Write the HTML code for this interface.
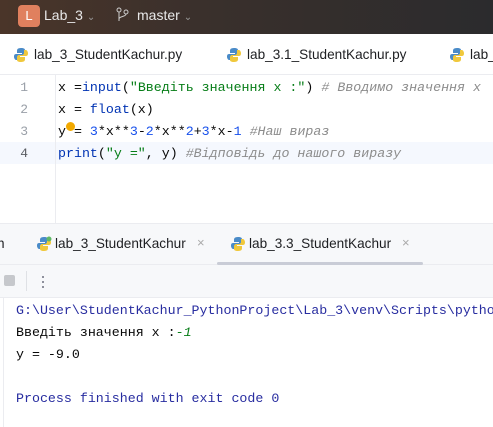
<!DOCTYPE html>
<html><head><meta charset="utf-8"><style>
*{margin:0;padding:0;box-sizing:border-box}
body{width:493px;height:427px;overflow:hidden;background:#fff;font-family:"Liberation Sans","DejaVu Sans",sans-serif;position:relative}
.abs{position:absolute}
.title{left:0;top:0;width:493px;height:34px;background:linear-gradient(90deg,#4a3529,#3a302c 40%,#2b2b2d)}
.mono{font-family:"Liberation Mono","DejaVu Sans Mono",monospace;font-size:13.3px;white-space:pre}
.ln{color:#9aa0a8;font-size:13px;left:0;width:28px;text-align:right}
.tab{font-size:13.6px;color:#1e1f22;white-space:nowrap}
.cm{color:#8c8c8c;font-style:italic}
.st{color:#067d17}
.nm{color:#1750eb}
.kw{color:#0033b3}
</style></head><body>
<div class="abs title"></div>
<div class="abs" style="left:18px;top:5px;width:22px;height:22px;border-radius:4px;background:#e0805e;color:#fff;font-size:13px;text-align:center;line-height:22px">L</div>
<div class="abs" style="left:44px;top:7px;color:#e8e8e8;font-size:14px">Lab_3 <span style="color:#999;font-size:10px">&#8964;</span></div>
<svg class="abs" style="left:116px;top:7px" width="14" height="16" viewBox="0 0 14 16"><circle cx="3" cy="3" r="2" fill="none" stroke="#ccc"/><circle cx="10" cy="5" r="2" fill="none" stroke="#ccc"/><path d="M3 5V14M10 7C10 10 3 9 3 12" fill="none" stroke="#ccc"/></svg>
<div class="abs" style="left:137px;top:7px;color:#e8e8e8;font-size:14px">master <span style="color:#999;font-size:10px">&#8964;</span></div>

<div class="abs" style="left:0;top:74px;width:493px;height:1px;background:#ebecf0"></div>
<svg class="abs" style="left:13px;top:47px" width="16" height="16" viewBox="0 0 16 16"><path d="M8 1C4 1 4 3 4 4V6H9V7H3C1 7 1 9 1 10S2 13 3 13H5V10C5 9 6 8 7 8H10C11 8 12 7 12 6V3C12 2 11 1 8 1Z" fill="#4a8bc8"/><path d="M8 15C12 15 12 13 12 12V10H7V9H13C15 9 15 7 15 6S14 3 13 3H11V6C11 7 10 8 9 8H6C5 8 4 9 4 10V13C4 14 5 15 8 15Z" fill="#f0c83c"/></svg>
<div class="abs tab" style="left:34px;top:47px">lab_3_StudentKachur.py</div>
<svg class="abs" style="left:226px;top:47px" width="16" height="16" viewBox="0 0 16 16"><path d="M8 1C4 1 4 3 4 4V6H9V7H3C1 7 1 9 1 10S2 13 3 13H5V10C5 9 6 8 7 8H10C11 8 12 7 12 6V3C12 2 11 1 8 1Z" fill="#4a8bc8"/><path d="M8 15C12 15 12 13 12 12V10H7V9H13C15 9 15 7 15 6S14 3 13 3H11V6C11 7 10 8 9 8H6C5 8 4 9 4 10V13C4 14 5 15 8 15Z" fill="#f0c83c"/></svg>
<div class="abs tab" style="left:247px;top:47px">lab_3.1_StudentKachur.py</div>
<svg class="abs" style="left:449px;top:47px" width="16" height="16" viewBox="0 0 16 16"><path d="M8 1C4 1 4 3 4 4V6H9V7H3C1 7 1 9 1 10S2 13 3 13H5V10C5 9 6 8 7 8H10C11 8 12 7 12 6V3C12 2 11 1 8 1Z" fill="#4a8bc8"/><path d="M8 15C12 15 12 13 12 12V10H7V9H13C15 9 15 7 15 6S14 3 13 3H11V6C11 7 10 8 9 8H6C5 8 4 9 4 10V13C4 14 5 15 8 15Z" fill="#f0c83c"/></svg>
<div class="abs tab" style="left:470px;top:47px">lab_</div>

<div class="abs" style="left:0;top:142px;width:493px;height:22px;background:#f5f8fe"></div>
<div class="abs" style="left:55px;top:75px;width:1px;height:148px;background:#ebecf0"></div>
<div class="abs mono ln" style="top:80px">1</div>
<div class="abs mono ln" style="top:102px">2</div>
<div class="abs mono ln" style="top:124px">3</div>
<div class="abs mono ln" style="top:146px;color:#5a5d63">4</div>
<div class="abs mono" style="left:58px;top:80px;color:#080808">x =<span class="kw">input</span>(<span class="st">"Введіть значення x :"</span>) <span class="cm"># Вводимо значення x</span></div>
<div class="abs mono" style="left:58px;top:102px;color:#080808">x = <span class="kw">float</span>(x)</div>
<div class="abs mono" style="left:58px;top:124px;color:#080808">y = <span class="nm">3</span>*x**<span class="nm">3</span>-<span class="nm">2</span>*x**<span class="nm">2</span>+<span class="nm">3</span>*x-<span class="nm">1</span> <span class="cm">#Наш вираз</span></div>
<div class="abs" style="left:66px;top:122px;width:9px;height:9px;border-radius:50%;background:#f2a900"></div>
<div class="abs mono" style="left:58px;top:146px;color:#080808"><span class="kw">print</span>(<span class="st">"y ="</span>, y) <span class="cm">#Відповідь до нашого виразу</span></div>

<div class="abs" style="left:0;top:223px;width:493px;height:75px;background:#f7f8fa;border-top:1px solid #ebecf0"></div>
<div class="abs" style="left:0;top:264px;width:493px;height:1px;background:#ebecf0"></div>
<div class="abs" style="left:0;top:297px;width:493px;height:1px;background:#ebecf0"></div>
<div class="abs tab" style="left:-3px;top:236px">n</div>
<svg class="abs" style="left:36px;top:236px" width="16" height="16" viewBox="0 0 16 16"><path d="M8 1C4 1 4 3 4 4V6H9V7H3C1 7 1 9 1 10S2 13 3 13H5V10C5 9 6 8 7 8H10C11 8 12 7 12 6V3C12 2 11 1 8 1Z" fill="#4a8bc8"/><path d="M8 15C12 15 12 13 12 12V10H7V9H13C15 9 15 7 15 6S14 3 13 3H11V6C11 7 10 8 9 8H6C5 8 4 9 4 10V13C4 14 5 15 8 15Z" fill="#f0c83c"/><circle cx="13" cy="3" r="2.5" fill="#5fb865"/></svg>
<div class="abs tab" style="left:55px;top:236px">lab_3_StudentKachur</div>
<div class="abs" style="left:197px;top:235px;color:#aaa;font-size:13px">×</div>
<svg class="abs" style="left:230px;top:236px" width="16" height="16" viewBox="0 0 16 16"><path d="M8 1C4 1 4 3 4 4V6H9V7H3C1 7 1 9 1 10S2 13 3 13H5V10C5 9 6 8 7 8H10C11 8 12 7 12 6V3C12 2 11 1 8 1Z" fill="#4a8bc8"/><path d="M8 15C12 15 12 13 12 12V10H7V9H13C15 9 15 7 15 6S14 3 13 3H11V6C11 7 10 8 9 8H6C5 8 4 9 4 10V13C4 14 5 15 8 15Z" fill="#f0c83c"/></svg>
<div class="abs tab" style="left:249px;top:236px">lab_3.3_StudentKachur</div>
<div class="abs" style="left:402px;top:235px;color:#aaa;font-size:13px">×</div>
<div class="abs" style="left:217px;top:262px;width:206px;height:3px;border-radius:2px;background:#c9ccd6"></div>
<div class="abs" style="left:4px;top:275px;width:11px;height:11px;border-radius:2px;background:#c6c8cc"></div>
<div class="abs" style="left:26px;top:271px;width:1px;height:20px;background:#dfe1e5"></div>
<svg class="abs" style="left:41px;top:275px" width="4" height="14" viewBox="0 0 4 14"><circle cx="2" cy="2" r="1" fill="#6c707e"/><circle cx="2" cy="7" r="1" fill="#6c707e"/><circle cx="2" cy="12" r="1" fill="#6c707e"/></svg>

<div class="abs" style="left:0;top:298px;width:493px;height:129px;background:#fff"></div>
<div class="abs" style="left:3px;top:298px;width:1px;height:129px;background:#ebecf0"></div>
<div class="abs mono" style="left:16px;top:303px;color:#282da0">G:\User\StudentKachur_PythonProject\Lab_3\venv\Scripts\python</div>
<div class="abs mono" style="left:16px;top:325px;color:#080808">Введіть значення x :<span style="color:#067d17;font-style:italic">-1</span></div>
<div class="abs mono" style="left:16px;top:347px;color:#080808">y = -9.0</div>
<div class="abs mono" style="left:16px;top:391px;color:#282da0">Process finished with exit code 0</div>
</body></html>
